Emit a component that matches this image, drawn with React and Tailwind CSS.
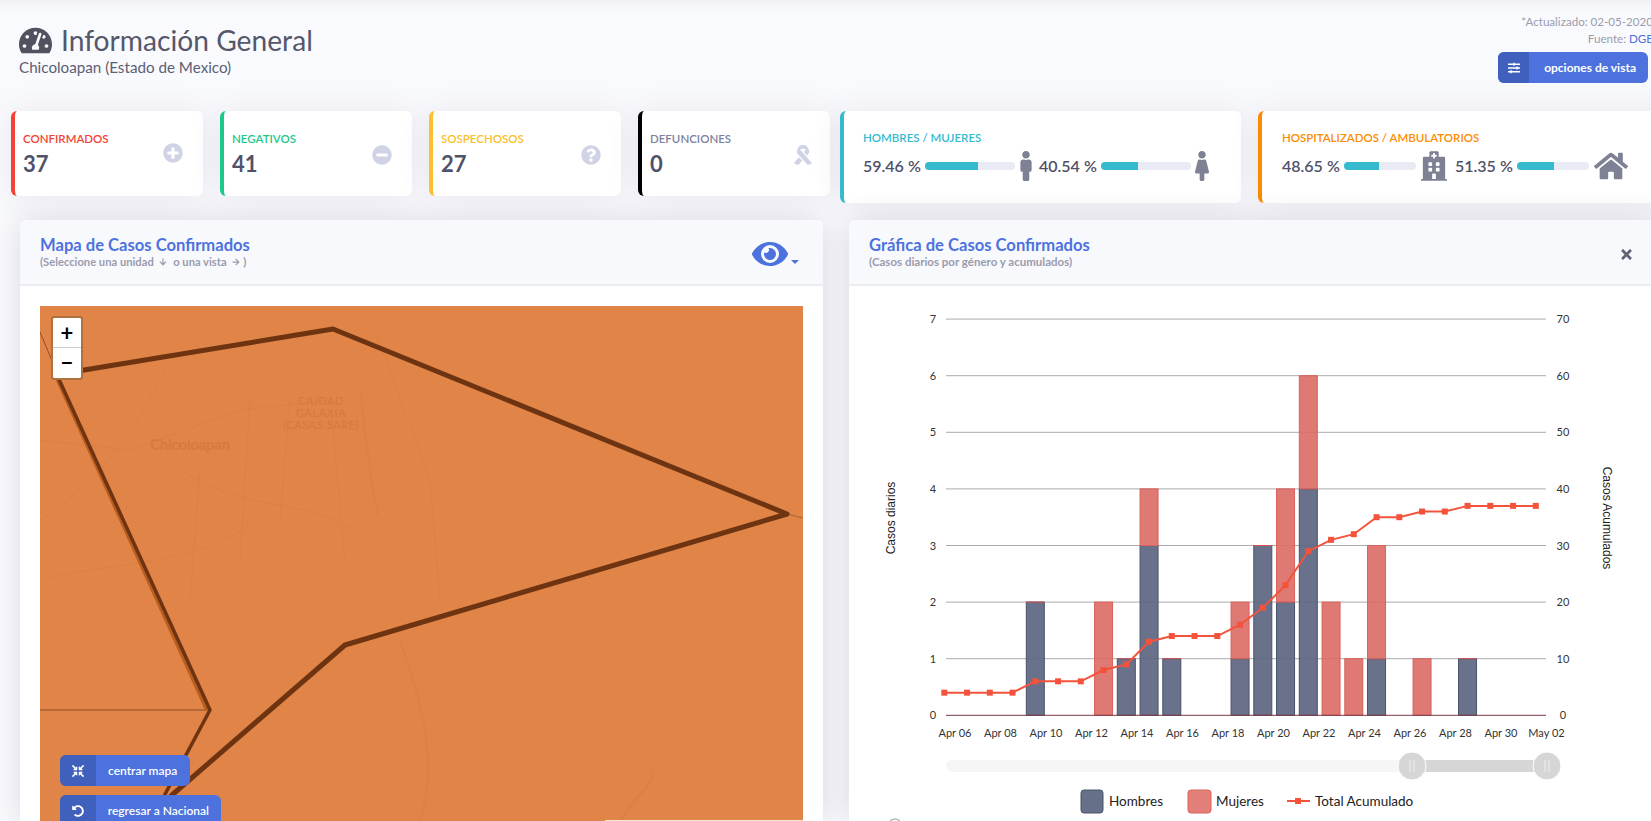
import React from "react";
import {
  FaTachometerAlt, FaPlusCircle, FaMinusCircle, FaQuestionCircle, FaRibbon, FaMale, FaFemale,
  FaHospital, FaHome, FaEye, FaTimes, FaSlidersH, FaCompressArrowsAlt, FaUndoAlt, FaArrowDown, FaArrowRight,
} from "react-icons/fa";

const font = "font-['Lato','Open_Sans',sans-serif]";

const hombres = [0, 0, 0, 0, 2, 0, 0, 0, 1, 3, 1, 0, 0, 1, 3, 2, 4, 0, 0, 1, 0, 0, 0, 1, 0, 0, 0];
const mujeres = [0, 0, 0, 0, 0, 0, 0, 2, 0, 1, 0, 0, 0, 1, 0, 2, 2, 2, 1, 2, 0, 1, 0, 0, 0, 0, 0];
const total = [4, 4, 4, 4, 6, 6, 6, 8, 9, 13, 14, 14, 14, 16, 19, 23, 29, 31, 32, 35, 35, 36, 36, 37, 37, 37, 37];
const fechas = ["Apr 06", "Apr 08", "Apr 10", "Apr 12", "Apr 14", "Apr 16", "Apr 18", "Apr 20", "Apr 22", "Apr 24", "Apr 26", "Apr 28", "Apr 30", "May 02"];

const x0 = 944.3;
const paso = 22.75;
const base = 715.3;
const unidad = 56.6;

const SmallCard = ({ label, value, Icon, border, color, iconClass, ml }) => (
  <div className={`w-[192px] h-[85px] shrink-0 flex items-center justify-between bg-white rounded-md border-l-[4px] ${border} ${ml} pl-[8px] pr-[20px] shadow-[0_0_30px_rgba(82,63,105,0.1)]`}>
    <div className="flex flex-col mt-[1px]">
      <span className={`text-[11.5px] leading-[16px] font-semibold ${color}`}>{label}</span>
      <span className="text-[22px] leading-[26px] mt-[4px] font-bold text-[#50526a]">{value}</span>
    </div>
    <Icon className={`text-[#d0d3e6] ${iconClass}`} />
  </div>
);

const Barra = ({ value, width, pct }) => (
  <div className="flex items-center">
    <span className="text-[16px] font-semibold text-[#50526a] whitespace-nowrap w-[62px]">{value}</span>
    <div className="h-[8px] rounded-full bg-[#e9ebf4] overflow-hidden" style={{ width }}>
      <div className="h-full bg-[#36bbce]" style={{ width: pct }} />
    </div>
  </div>
);

const Mapa = () => (
  <svg viewBox="40 306 763 515" className="block w-full h-full">
    <rect x="40" y="306" width="763" height="515" fill="#e08447" />
    <g fill="none" stroke="#dc8045" strokeWidth="1">
      <path d="M40 520 C100 480 130 440 165 370" />
      <path d="M40 440 L130 450 L240 410 L330 400 L345 560" />
      <path d="M180 470 C260 520 300 490 370 540" />
      <path d="M360 390 C370 480 375 500 378 515" strokeWidth="2" />
      <path d="M250 400 L240 560 M290 395 L280 520 M200 470 L190 600" />
      <path d="M40 580 C120 560 180 570 260 520" />
      <path d="M400 640 C420 700 440 760 420 821" strokeWidth="2" />
      <path d="M620 821 C640 790 660 780 650 770" strokeWidth="2" />
      <path d="M355 306 L375 330 L430 480 L440 600" />
    </g>
    <text x="190" y="450" textAnchor="middle" fill="#d47a42" fontSize="14.5" fontWeight="700" fontFamily="Lato, sans-serif">Chicoloapan</text>
    <g textAnchor="middle" fill="#d47a42" fontSize="11" fontFamily="Lato, sans-serif" letterSpacing="0.6">
      <text x="321" y="405">CIUDAD</text>
      <text x="321" y="417">GALAXIA</text>
      <text x="321" y="429">(CASAS SARE)</text>
    </g>
    <path d="M40 710 L210 710" stroke="#a9602f" strokeWidth="1.5" />
    <path d="M787 514 L803 518" stroke="#a9602f" strokeWidth="1" />
    <path d="M40 332 L58 375" stroke="#8f4f24" strokeWidth="1" />
    <path d="M56 376 L207 710" stroke="#b85f1f" strokeWidth="4" fill="none" />
    <path d="M57 375 L210 710 L163 798 L150 821" stroke="#6e3311" strokeWidth="3.5" fill="none" strokeLinejoin="round" />
    <path d="M78 371 L333 329 L787 514 L345 645 L172 795 L145 821" stroke="#6e3311" strokeWidth="5" fill="none" strokeLinejoin="round" />
  </svg>
);

const Grafica = () => {
  const xs = total.map((_, i) => x0 + paso * i);
  return (
    <svg viewBox="849 286 802 535" className="block w-[802px] h-[535px]" fontFamily="Lato, sans-serif">
      {[0, 1, 2, 3, 4, 5, 6, 7].map((n) => {
        const y = base - unidad * n;
        return (
          <g key={n}>
            {n > 0 && <line x1="946" x2="1546" y1={y} y2={y} stroke="#acacb0" strokeWidth="1" />}
            <text x="933" y={y + 4} fontSize="11" fill="#333" textAnchor="middle">{n}</text>
            <text x="1563" y={y + 4} fontSize="11" fill="#333" textAnchor="middle">{n * 10}</text>
          </g>
        );
      })}
      {xs.map((x, i) => (
        <g key={i}>
          {hombres[i] > 0 && (
            <rect x={x - 9} y={base - hombres[i] * unidad} width="18" height={hombres[i] * unidad} fill="#5c6680" fillOpacity="0.92" stroke="#48526c" strokeWidth="1" />
          )}
          {mujeres[i] > 0 && (
            <rect x={x - 9} y={base - (hombres[i] + mujeres[i]) * unidad} width="18" height={mujeres[i] * unidad} fill="#dc6a64" fillOpacity="0.9" stroke="#d9625c" strokeWidth="1" />
          )}
          {hombres[i] > 0 && mujeres[i] === 0 && (
            <line x1={x - 9} x2={x + 9} y1={base - hombres[i] * unidad} y2={base - hombres[i] * unidad} stroke="#d9534f" strokeWidth="1" />
          )}
        </g>
      ))}
      <line x1="946" x2="1546" y1={base} y2={base} stroke="#7a3a44" strokeWidth="1" />
      <polyline points={xs.map((x, i) => `${x},${base - total[i] * 5.66}`).join(" ")} fill="none" stroke="#f4523b" strokeWidth="2" />
      {xs.map((x, i) => (
        <rect key={i} x={x - 3} y={base - total[i] * 5.66 - 3} width="6" height="6" fill="#f4523b" />
      ))}
      {fechas.map((f, i) => (
        <text key={f} x={955 + 45.5 * i} y="737" fontSize="11" fill="#333" textAnchor="middle">{f}</text>
      ))}
      <text transform="translate(895 518) rotate(-90)" textAnchor="middle" fontSize="12" fill="#222" fontFamily="Liberation Sans, sans-serif">Casos diarios</text>
      <text transform="translate(1603 518) rotate(90)" textAnchor="middle" fontSize="12" fill="#222" fontFamily="Liberation Sans, sans-serif">Casos Acumulados</text>

      <rect x="946" y="760" width="470" height="12" rx="6" fill="#f6f6f6" />
      <rect x="1412" y="760" width="135" height="12" fill="#d6d6d6" />
      {[1412, 1547].map((x) => (
        <g key={x}>
          <circle cx={x} cy="766" r="14" fill="#d6d6d6" stroke="#fff" strokeWidth="1" />
          <path d={`M${x - 2} 760V772M${x + 2} 760V772`} stroke="#eee" strokeWidth="1" />
        </g>
      ))}

      <rect x="1081" y="790" width="22" height="23" rx="3" fill="#667088" stroke="#48526c" />
      <text x="1109" y="806" fontSize="13.5" fill="#222">Hombres</text>
      <rect x="1188" y="790" width="23" height="23" rx="3" fill="#e27f79" stroke="#d9625c" />
      <text x="1216" y="806" fontSize="13.5" fill="#222">Mujeres</text>
      <line x1="1287" x2="1310" y1="801" y2="801" stroke="#f4523b" strokeWidth="2" />
      <rect x="1295" y="798" width="6" height="6" fill="#f4523b" />
      <text x="1315" y="806" fontSize="13.5" fill="#222">Total Acumulado</text>
      <circle cx="895" cy="825" r="6" fill="none" stroke="#b5b5b5" strokeWidth="1.5" />
    </svg>
  );
};

const BotonIcono = ({ Icon, children, className }) => (
  <button className={`flex items-stretch h-[31px] rounded-md overflow-hidden bg-[#4d72de] text-white text-[12px] font-semibold shrink-0 ${className}`}>
    <span className="w-[36px] bg-[#4060be] flex items-center justify-center"><Icon className="text-[12px]" /></span>
    <span className="pl-[12px] pr-[12px] flex items-center whitespace-nowrap">{children}</span>
  </button>
);

export default function App() {
  return (
    <div className={`${font} w-[1651px] h-[821px] overflow-hidden bg-[#f9fafd] shadow-[inset_0_12px_12px_-10px_rgba(82,63,105,0.08)]`}>
      {/* encabezado */}
      <div className="h-[111px] w-[1653px] flex justify-between pl-[19px]">
        <div className="pt-[23px]">
          <div className="flex items-center gap-[9px] h-[34px]">
            <FaTachometerAlt className="text-[33px] text-[#50525f]" />
            <h1 className="text-[28.2px] leading-[34px] text-[#55576a]">Información General</h1>
          </div>
          <p className="text-[15.2px] leading-[20px] text-[#5c5e75]">Chicoloapan (Estado de Mexico)</p>
        </div>
        <div className="flex flex-col items-end pt-[13px]">
          <span className="text-[11.6px] leading-[17px] text-[#9a9cad]">*Actualizado: 02-05-2020</span>
          <span className="text-[11.6px] leading-[17px] text-[#9a9cad]">Fuente: <span className="text-[#4d72de]">DGE</span></span>
          <BotonIcono Icon={FaSlidersH} className="mt-[5px] mr-[5px] w-[150px]">
            <span className="pl-[3px] font-bold">opciones de vista</span>
          </BotonIcono>
        </div>
      </div>

      {/* tarjetas */}
      <div className="flex items-start pl-[11px] h-[109px]">
        <SmallCard label="CONFIRMADOS" value="37" Icon={FaPlusCircle} border="border-[#f44336]" color="text-[#f44336]" iconClass="text-[20px] -mt-[1px]" ml="" />
        <SmallCard label="NEGATIVOS" value="41" Icon={FaMinusCircle} border="border-[#1cc88a]" color="text-[#1cc88a]" iconClass="text-[20px] mt-[3px]" ml="ml-[17px]" />
        <SmallCard label="SOSPECHOSOS" value="27" Icon={FaQuestionCircle} border="border-[#fbc02d]" color="text-[#fbc02d]" iconClass="text-[20px] mt-[3px]" ml="ml-[17px]" />
        <SmallCard label="DEFUNCIONES" value="0" Icon={FaRibbon} border="border-black" color="text-[#7e82a0]" iconClass="text-[20px] mt-[3px] -mr-[3px]" ml="ml-[17px]" />

        <div className="ml-[10px] w-[401px] h-[92px] shrink-0 bg-white rounded-md border-l-[4px] border-[#36bbce] pl-[19px] pt-[19px] shadow-[0_0_30px_rgba(82,63,105,0.1)]">
          <div className="text-[11.5px] leading-[16px] font-semibold text-[#36bbce]">HOMBRES / MUJERES</div>
          <div className="flex items-center mt-[5px] h-[30px]">
            <Barra value="59.46 %" width={90} pct="59%" />
            <FaMale className="text-[30px] text-[#7e8094] mx-[-6px] w-[34px]" />
            <div className="w-[2px]" />
            <Barra value="40.54 %" width={90} pct="41%" />
            <FaFemale className="text-[30px] text-[#7e8094] ml-[-6px] w-[34px]" />
          </div>
        </div>

        <div className="ml-[17px] w-[420px] h-[92px] shrink-0 bg-white rounded-l-md border-l-[4px] border-[#fb8c00] pl-[20px] pt-[19px] shadow-[0_0_30px_rgba(82,63,105,0.1)]">
          <div className="text-[11.5px] leading-[16px] font-semibold text-[#fb8c00]">HOSPITALIZADOS / AMBULATORIOS</div>
          <div className="flex items-center mt-[5px] h-[30px]">
            <Barra value="48.65 %" width={72} pct="48%" />
            <FaHospital className="text-[30px] text-[#7e8094] ml-[5px] w-[26px]" />
            <div className="w-[8px]" />
            <Barra value="51.35 %" width={72} pct="51%" />
            <FaHome className="text-[32px] text-[#7e8094] ml-[5px] w-[34px]" />
          </div>
        </div>
      </div>

      {/* paneles */}
      <div className="flex items-start pl-[20px] gap-[26px]">
        <div className="w-[803px] h-[601px] shrink-0 bg-white rounded-t-md overflow-hidden shadow-[0_0_30px_rgba(82,63,105,0.18)]">
          <div className="h-[66px] bg-[#f8f9fd] border-b-2 border-[#ebedf3] flex items-center justify-between pl-[20px] pr-[24px]">
            <div>
              <h3 className="text-[16.6px] leading-[20px] font-bold text-[#4d72de]">Mapa de Casos Confirmados</h3>
              <p className="text-[11.2px] leading-[14px] font-bold text-[#9a9cad] flex items-center gap-[3px] whitespace-pre">
                (Seleccione una unidad <FaArrowDown className="text-[8px]" /> o una vista <FaArrowRight className="text-[8px]" />)
              </p>
            </div>
            <div className="flex items-end mt-[4px]">
              <FaEye className="text-[36px] text-[#4d72de]" />
              <span className="ml-[3px] mb-[8px] w-0 h-0 border-x-[4px] border-x-transparent border-t-[4px] border-t-[#4d72de]" />
            </div>
          </div>
          <div className="px-[20px] pt-[20px]">
            <div className="relative h-[515px]">
              <Mapa />
              <div className="absolute left-[11px] top-[10px] w-[32px] bg-white rounded-[3px] border-2 border-[#b0703f] bg-clip-padding flex flex-col text-black">
                <span className="h-[30px] flex items-center justify-center text-[22px] font-bold leading-none border-b border-[#ccc]">+</span>
                <span className="h-[30px] flex items-center justify-center text-[22px] font-bold leading-none">−</span>
              </div>
              <div className="absolute left-[20px] top-[449px] flex flex-col items-start gap-[9px]">
                <BotonIcono Icon={FaCompressArrowsAlt} className="w-[130px]">centrar mapa</BotonIcono>
                <BotonIcono Icon={FaUndoAlt} className="w-[161px]">regresar a Nacional</BotonIcono>
              </div>
              <div className="absolute right-0 bottom-0 w-[198px] h-[1px] bg-[#f8e3d0]" />
            </div>
          </div>
        </div>

        <div className="w-[810px] h-[601px] shrink-0 bg-white rounded-t-md overflow-hidden shadow-[0_0_30px_rgba(82,63,105,0.18)]">
          <div className="h-[66px] bg-[#f8f9fd] border-b-2 border-[#ebedf3] flex items-center justify-between pl-[20px] pr-[20px]">
            <div>
              <h3 className="text-[16.6px] leading-[20px] font-bold text-[#4d72de]">Gráfica de Casos Confirmados</h3>
              <p className="text-[11.5px] leading-[14px] font-bold text-[#9a9cad]">(Casos diarios por género y acumulados)</p>
            </div>
            <FaTimes className="text-[15px] text-[#5f6175] mt-[4px] mr-[5px]" />
          </div>
          <Grafica />
        </div>
      </div>
    </div>
  );
}
